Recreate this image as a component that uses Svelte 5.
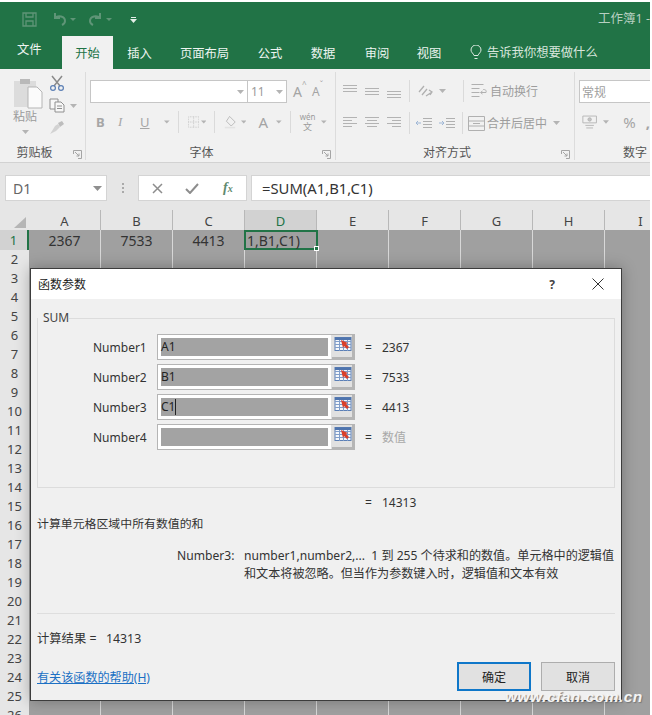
<script>
  const tabs = [
    { t: "文件", w: 62, first: true },
    { t: "开始", w: 51, on: true },
    { t: "插入", w: 53 },
    { t: "页面布局", w: 77 },
    { t: "公式", w: 54 },
    { t: "数据", w: 52 },
    { t: "审阅", w: 56 },
    { t: "视图", w: 48 },
  ];
  const cols = ["A", "B", "C", "D", "E", "F", "G", "H", "I"];
  const rows = Array.from({ length: 26 }, (_, i) => i + 1);
  const args = [
    { name: "Number1", val: "A1", res: "2367" },
    { name: "Number2", val: "B1", res: "7533" },
    { name: "Number3", val: "C1", res: "4413", caret: true },
    { name: "Number4", val: "", res: "数值", hint: true },
  ];
</script>

{#snippet arrow()}
  <svg class="arrow" width="7" height="4" viewBox="0 0 7 4"><path d="M0 0h7L3.500 4z" fill="#b4b4b4" /></svg>
{/snippet}

{#snippet launcher()}
  <svg class="launch" width="9" height="9" viewBox="0 0 9 9" fill="none" stroke="#a5a5a5"><path d="M.5 4V.5H8.500V8.500H5" /><path d="M2 2l4 4M6 3.500V6H3.500" /></svg>
{/snippet}

{#snippet lines(kind)}
  <svg width="16" height="14" viewBox="0 0 16 14" stroke="#b3b3b3" fill="none">
    {#if kind === "top"}
      <path d="M1 1.500h14M1 4.500h14M1 7.500h14" />
    {:else if kind === "mid"}
      <path d="M1 4.500h14M1 7.500h14M1 10.500h14" />
    {:else if kind === "bot"}
      <path d="M1 7.500h14M1 10.500h14M1 13.500h14" />
    {:else if kind === "left"}
      <path d="M1 1.500h14M1 4.500h9M1 7.500h14M1 10.500h9" />
    {:else if kind === "center"}
      <path d="M1 1.500h14M3 4.500h10M1 7.500h14M3 10.500h10" />
    {:else}
      <path d="M1 1.500h14M6 4.500h9M1 7.500h14M6 10.500h9" />
    {/if}
  </svg>
{/snippet}

{#snippet refpick()}
  <svg width="18" height="17" viewBox="0 0 18 17">
    <rect x="1" y="1.500" width="16" height="13" fill="#f4f7fb" stroke="#5b7fb5" />
    <path d="M1 5.500h16M1 8.500h16M1 11.500h16M5.500 2v13M9.500 2v13M13.500 2v13" stroke="#7f9dca" fill="none" />
    <path d="M1 1.500h16v2.500H1z" fill="#4f74ad" />
    <path d="M7 4l7 3-2 1 3 3-2 2-3-3-1 2z" fill="#d9402b" />
  </svg>
{/snippet}

<div class="page">
  <header class="titlebar">
    <svg class="save" width="15" height="15" viewBox="0 0 15 15" fill="none" stroke="#5f9577" stroke-width="1.300">
      <path d="M1 1h13v13H1z" /><path d="M4 1v4h7V1M4 14V9h7v5" />
    </svg>
    <svg class="undo" width="15" height="14" viewBox="0 0 15 14" fill="none" stroke="#5f9577" stroke-width="2">
      <path d="M3 1v5h5" /><path d="M3 6c3-3 10-2 10 3 0 2-1 3-3 4" />
    </svg>
    <svg class="qa-arrow" width="6" height="3" viewBox="0 0 6 3"><path d="M0 0h6L3 3z" fill="#5f9577" /></svg>
    <svg class="redo" width="15" height="14" viewBox="0 0 15 14" fill="none" stroke="#5f9577" stroke-width="2">
      <path d="M12 1v5H7" /><path d="M12 6C9 3 2 4 2 9c0 2 1 3 3 4" />
    </svg>
    <svg class="qa-arrow" width="6" height="3" viewBox="0 0 6 3"><path d="M0 0h6L3 3z" fill="#5f9577" /></svg>
    <svg class="custom" width="7" height="7" viewBox="0 0 7 7"><path d="M1 1h5v1H1zM0 3h7L3.500 7z" fill="#e4efe8" /></svg>
    <span class="doc">工作簿1 -</span>
  </header>

  <nav class="tabs">
    {#each tabs as tab}
      <span class="tab" class:on={tab.on} class:first={tab.first} style="width: {tab.w}px">{tab.t}</span>
    {/each}
    <svg class="bulb" width="12" height="15" viewBox="0 0 12 15" fill="none" stroke="#dfeae3">
      <path d="M4 10.500C3.500 8.500 1 7.500 1 5a5 5 0 0 1 10 0c0 2.500-2.500 3.500-3 5.500zM4.500 13.500h3" />
    </svg>
    <span class="tell">告诉我你想要做什么</span>
  </nav>

  <section class="ribbon">
    <div class="group clip">
      <div class="clip-main">
        <div class="paste">
          <svg width="30" height="34" viewBox="0 0 30 34">
            <path d="M1 6h22v26H1z" fill="#dcdcdc" />
            <path d="M7 4h10v5H7z" fill="#b9b9b9" />
            <path d="M15 12h9l5 5v16H15z" fill="#fbfbfb" stroke="#b5b5b5" />
          </svg>
          <span>粘贴</span>
          {@render arrow()}
        </div>
        <div class="clip-tools">
          <svg width="16" height="16" viewBox="0 0 16 16" fill="none">
            <path d="M3 1l8 10M13 1L5 11" stroke="#8a8a8a" stroke-width="1.500" />
            <circle cx="4" cy="13" r="2.400" stroke="#5b7fb5" stroke-width="1.200" />
            <circle cx="12" cy="13" r="2.400" stroke="#5b7fb5" stroke-width="1.200" />
          </svg>
          <div class="copy">
            <svg width="17" height="15" viewBox="0 0 17 15" fill="#f7f7f7" stroke="#8f8f8f">
              <path d="M1 1h8v10H1z" /><path d="M6 4h6l3 3v7H6z" /><path d="M8 8h5M8 10.500h5" />
            </svg>
            {@render arrow()}
          </div>
          <svg width="16" height="16" viewBox="0 0 16 16">
            <path d="M9 3l4-2 2 3-4 3z" fill="#bdbdbd" />
            <path d="M9 4l2 3-4 4-4 2-2 1 2-3 3-5z" fill="#d2d2d2" />
          </svg>
        </div>
      </div>
      <div class="glabel"><span>剪贴板</span>{@render launcher()}</div>
    </div>

    <div class="group font">
      <div class="grow first-row">
        <div class="combo fontname">{@render arrow()}</div>
        <div class="combo fontsize"><span>11</span>{@render arrow()}</div>
        <span class="grow-a big">A<sup>^</sup></span>
        <span class="grow-a small">A<sup>ˇ</sup></span>
      </div>
      <div class="grow second-row">
        <b class="fmt">B</b>
        <i class="fmt serif">I</i>
        <u class="fmt">U</u>
        {@render arrow()}
        <span class="sep"></span>
        <svg width="14" height="14" viewBox="0 0 14 14" fill="none" stroke="#c0c0c0" stroke-dasharray="1 1">
          <path d="M.5.500h13v13H.500zM7 .500v13M.5 7h13" />
        </svg>
        {@render arrow()}
        <span class="sep"></span>
        <svg width="18" height="16" viewBox="0 0 18 16" fill="none">
          <path d="M7 1l7 7-5 5-6-6z" stroke="#b0b0b0" />
          <path d="M1 14h13v2H1z" fill="#e3e3e3" />
        </svg>
        {@render arrow()}
        <span class="color-a">A</span>
        {@render arrow()}
        <span class="sep"></span>
        <span class="wen"><small>wén</small><span>文</span></span>
        {@render arrow()}
      </div>
      <div class="glabel"><span>字体</span>{@render launcher()}</div>
    </div>

    <div class="group align">
      <div class="align-top">
        <div class="grow wrap-row">
          {@render lines("top")}{@render lines("mid")}{@render lines("bot")}
          <span class="sep"></span>
          <svg width="16" height="14" viewBox="0 0 16 14" fill="none" stroke="#b0b0b0" stroke-width="1.300">
            <path d="M2 8l5-6M5 11l5-6M9 12l6-4M12 6l3 2-2 3" />
          </svg>
          {@render arrow()}
          <span class="sep"></span>
          <svg width="17" height="15" viewBox="0 0 17 15" fill="none" stroke="#b0b0b0">
            <path d="M.5.500h12M.5 4.500h8M.5 8.500h8M.5 12.500h8" /><path d="M10 8.500h5c1-3-2-3-3-3M11.500 7l-2 1.500 2 1.500" />
          </svg>
          <span class="rtext">自动换行</span>
        </div>
        <div class="grow merge-row">
          {@render lines("left")}{@render lines("center")}{@render lines("right")}
          <span class="sep"></span>
          <svg width="17" height="13" viewBox="0 0 17 13" fill="none" stroke="#b0b0b0">
            <path d="M8 1.500h9M8 4.500h9M8 7.500h9M8 10.500h9" /><path d="M6 6H1M3 4L1 6l2 2" stroke="#9fb7d6" />
          </svg>
          <svg width="17" height="13" viewBox="0 0 17 13" fill="none" stroke="#b0b0b0">
            <path d="M8 1.500h9M8 4.500h9M8 7.500h9M8 10.500h9" /><path d="M1 6h5M4 4l2 2-2 2" stroke="#9fb7d6" />
          </svg>
          <span class="sep"></span>
          <svg width="17" height="15" viewBox="0 0 17 15" fill="none" stroke="#b0b0b0">
            <path d="M.5.500h16v14H.500zM.5 5h16M.5 10h16M5 7.500h7" />
          </svg>
          <span class="rtext">合并后居中</span>
          {@render arrow()}
        </div>
      </div>
      <div class="glabel"><span>对齐方式</span>{@render launcher()}</div>
    </div>

    <div class="group number">
      <div class="combo numfmt">常规</div>
      <div class="grow">
        <svg width="18" height="16" viewBox="0 0 18 16" fill="none" stroke="#b0b0b0">
          <path d="M1 1h16v8H1z" /><path d="M4 12h10M5 15h8" /><circle cx="9" cy="5" r="2" fill="#c5c5c5" />
        </svg>
        {@render arrow()}
        <span class="pct">%</span>
        <span class="pct comma">,</span>
      </div>
      <div class="glabel"><span>数字</span></div>
    </div>
  </section>

  <section class="formula">
    <div class="namebox"><span>D1</span><svg width="9" height="5" viewBox="0 0 9 5"><path d="M0 0h9L4.500 5z" fill="#8f8f8f" /></svg></div>
    <span class="dots"></span>
    <div class="fxbtns">
      <svg width="11" height="11" viewBox="0 0 11 11" fill="none" stroke="#8d8d8d" stroke-width="1.500"><path d="M1 1l9 9M10 1l-9 9" /></svg>
      <svg width="14" height="11" viewBox="0 0 14 11" fill="none" stroke="#8d8d8d" stroke-width="2"><path d="M1 6l4 4 8-9" /></svg>
      <span class="fx">f<small>x</small></span>
    </div>
    <div class="fxinput">=SUM(A1,B1,C1)</div>
  </section>

  <section class="sheet">
    <div class="sheetrow head">
      <div class="corner"><svg width="12" height="11" viewBox="0 0 12 11"><path d="M12 0v11H0z" fill="#b5b5b5" /></svg></div>
      {#each cols as c}
        <div class="colhead" class:sel={c === "D"}>{c}</div>
      {/each}
    </div>
    {#each rows as r}
      <div class="sheetrow" class:tall={r === 1}>
        <div class="rowhead" class:sel={r === 1}>{r}</div>
        {#each cols as c, i}
          <div class="cell" class:active={r === 1 && c === "D"}>
            {#if r === 1 && i < 3}{["2367", "7533", "4413"][i]}{/if}
            {#if r === 1 && c === "D"}<span class="celltext">1,B1,C1)</span><em class="handle"></em>{/if}
          </div>
        {/each}
      </div>
    {/each}

    <div class="dialog">
      <div class="dtitle">
        <span>函数参数</span>
        <span class="help">?</span>
        <svg width="12" height="12" viewBox="0 0 12 12" fill="none" stroke="#333"><path d="M.5.500l11 11M11.500.500l-11 11" /></svg>
      </div>
      <div class="dbody">
        <fieldset>
          <legend>SUM</legend>
          {#each args as a}
            <div class="arg">
              <label for={a.name}>{a.name}</label>
              <div class="argbox">
                <div class="argval" id={a.name}>{a.val}{#if a.caret}<span class="caret"></span>{/if}</div>
                <div class="refbtn">{@render refpick()}</div>
              </div>
              <span class="eq">=</span>
              <span class="res" class:hint={a.hint}>{a.res}</span>
            </div>
          {/each}
        </fieldset>
        <div class="total"><span class="eq">=</span><span class="res">14313</span></div>
        <p class="desc">计算单元格区域中所有数值的和</p>
        <div class="detail">
          <span class="dname">Number3:</span>
          <p>number1,number2,...&nbsp; 1 到 255 个待求和的数值。单元格中的逻辑值和文本将被忽略。但当作为参数键入时，逻辑值和文本有效</p>
        </div>
        <hr />
        <p class="result">计算结果 =&nbsp;&nbsp; 14313</p>
        <div class="foot">
          <a href="#help">有关该函数的帮助(H)</a>
          <button class="ok">确定</button>
          <button>取消</button>
        </div>
      </div>
    </div>
    <span class="mark">www.cfan.com.cn</span>
  </section>
</div>

<style>
  :global(body) {
    margin: 0;
    background: #fff;
  }

  .page {
    width: 650px;
    height: 713px;
    padding-top: 2px;
    overflow: hidden;
    font-family: "Noto Sans", "Noto Sans CJK SC", sans-serif;
    font-size: 12px;
    color: #333;
  }

  .titlebar {
    height: 34px;
    background: #217346;
    display: flex;
    align-items: center;
    padding-left: 22px;
  }
  .undo { margin-left: 15px; }
  .redo { margin-left: 12px; }
  .qa-arrow { margin-left: 3px; }
  .custom { margin-left: 18px; }
  .doc {
    margin: 0 0 3px auto;
    color: #b7d0c1;
    font-size: 12.500px;
    white-space: nowrap;
  }

  .tabs {
    height: 33px;
    background: #217346;
    display: flex;
    color: #eef5f1;
    font-size: 12.300px;
  }
  .tab {
    display: flex;
    align-items: center;
    justify-content: center;
    box-sizing: border-box;
    white-space: nowrap;
  }
  .tab.first {
    justify-content: flex-start;
    padding: 0 0 7px 17px;
  }
  .tab.on {
    background: #f1f1f1;
    color: #217346;
  }
  .bulb {
    margin: 9px 0 0 17px;
  }
  .tell {
    margin-left: 5px;
    line-height: 33px;
    color: #d8e6dd;
    white-space: nowrap;
  }

  .ribbon {
    height: 94px;
    background: #f1f1f1;
    border-bottom: 1px solid #d2d2d2;
    box-sizing: border-box;
    display: flex;
    color: #9b9b9b;
  }
  .group {
    position: relative;
    flex: none;
    padding-top: 8px;
    box-sizing: border-box;
    border-right: 1px solid #dcdcdc;
    height: 88px;
    margin-top: 3px;
  }
  .glabel {
    position: absolute;
    left: 0;
    right: 0;
    top: 73px;
    text-align: center;
    color: #555;
    font-size: 12px;
    line-height: 16px;
  }
  .launch {
    position: absolute;
    right: 4px;
    top: 5px;
  }
  .grow {
    display: flex;
    align-items: center;
    height: 24px;
  }
  .sep {
    width: 1px;
    height: 22px;
    background: #dadada;
    flex: none;
  }

  .clip { width: 86px; }
  .clip-main {
    display: flex;
    padding-left: 13px;
  }
  .paste {
    width: 36px;
    display: flex;
    flex-direction: column;
    align-items: flex-start;
    margin-top: -5px;
    font-size: 12px;
    line-height: 15px;
  }
  .paste .arrow { margin: 6px 0 0 9px; }
  .clip-tools {
    display: flex;
    flex-direction: column;
    gap: 7px;
    margin-top: -5px;
  }
  .copy {
    display: flex;
    align-items: center;
    gap: 4px;
  }
  .clip .glabel { padding-right: 16px; }
  .clip .launch { right: 3px; }

  .font {
    width: 250px;
    padding-left: 4px;
  }
  .font .glabel { padding-right: 18px; }
  .combo {
    background: #fff;
    border: 1px solid #c6c6c6;
    box-sizing: border-box;
    height: 23px;
    display: flex;
    align-items: center;
  }
  .fontname {
    width: 158px;
    justify-content: flex-end;
    padding-right: 3px;
  }
  .fontsize {
    width: 40px;
    margin-left: -1px;
    padding-left: 3px;
    justify-content: space-between;
    padding-right: 3px;
  }
  .grow-a {
    font-size: 14px;
    color: #a4a4a4;
    position: relative;
  }
  .grow-a sup { font-size: 8px; position: absolute; top: -4px; }
  .grow-a.big { margin-left: 6px; }
  .grow-a.small { margin-left: 10px; font-size: 12px; }
  .first-row { height: 23px; }
  .second-row {
    margin-top: 7px;
    padding-left: 6px;
  }
  .fmt {
    width: 22px;
    font-size: 13px;
    flex: none;
    color: #a6a6a6;
    text-align: left;
  }
  .serif { font-family: "Liberation Serif", serif; }
  .second-row .arrow { margin: 0 8px 0 2px; }
  .second-row .sep { margin: 0 9px 0 0; }
  .color-a {
    font-size: 15px;
    color: #a4a4a4;
    margin: 0 6px 0 4px;
  }
  .wen {
    display: flex;
    flex-direction: column;
    align-items: center;
    font-size: 9px;
    line-height: 10px;
    margin-right: 4px;
  }
  .wen small { font-size: 8px; line-height: 10px; }

  .align {
    width: 239px;
    padding-left: 6px;
  }
  .align .glabel { padding-right: 16px; }
  .align-top {
    display: flex;
    flex-direction: column;
    gap: 8px;
    margin-top: -1px;
  }
  .align .grow { gap: 6px; }
  .align .sep { margin: 0 1px; }
  .wrap-row .arrow { margin-right: 10px; }
  .merge-row .sep + svg { margin-left: -2px; }
  .rtext {
    color: #9d9d9d;
    font-size: 12px;
    margin-left: -4px;
    white-space: nowrap;
  }

  .number {
    flex: 1;
    min-width: 0;
    border-right: 0;
    padding-left: 4px;
    overflow: hidden;
  }
  .numfmt {
    padding-left: 2px;
    border-right: 0;
    width: 72px;
    color: #a0a0a0;
  }
  .number .grow {
    margin-top: 7px;
    gap: 6px;
    padding-left: 3px;
  }
  .pct {
    font-size: 15px;
    color: #a4a4a4;
    margin-left: 8px;
  }
  .comma { margin-left: 4px; font-weight: 700; }
  .number .glabel {
    text-align: left;
    left: 48px;
    white-space: nowrap;
  }

  .formula {
    height: 47px;
    background: #e6e6e6;
    display: flex;
    align-items: flex-start;
    padding: 12px 0 0 5px;
    box-sizing: border-box;
  }
  .namebox, .fxbtns, .fxinput {
    height: 26px;
    background: #fff;
    border: 1px solid #d4d4d4;
    box-sizing: border-box;
    display: flex;
    align-items: center;
  }
  .namebox {
    width: 102px;
    padding: 0 4px 0 7px;
    justify-content: space-between;
    font-size: 14px;
    color: #666;
  }
  .dots {
    width: 2px;
    height: 10px;
    margin: 8px 14px 0 15px;
    background: repeating-linear-gradient(#aaa 0 2px, transparent 2px 4px);
  }
  .fxbtns {
    width: 109px;
    padding-left: 13px;
    gap: 22px;
  }
  .fx {
    font-family: "Liberation Serif", serif;
    font-style: italic;
    font-weight: 700;
    font-size: 14px;
    color: #5f8a6f;
    margin-left: 2px;
  }
  .fx small { font-size: 10px; }
  .fxinput {
    flex: 1;
    margin-left: 4px;
    padding-left: 10px;
    border-right: 0;
    font-size: 14.800px;
    color: #333;
  }

  .sheet {
    position: relative;
    background: #a0a0a0;
  }
  .sheetrow {
    display: grid;
    grid-template-columns: 29px repeat(9, 72px);
    height: 19px;
  }
  .sheetrow.tall { height: 20px; }
  .head {
    height: 20px;
    background: #e6e6e6;
  }
  .corner {
    display: flex;
    justify-content: flex-end;
    padding: 7px 3px 0 0;
  }
  .colhead {
    text-align: center;
    font-size: 13px;
    line-height: 22px;
    color: #444;
    border-right: 1px solid #b8b8b8;
    box-sizing: border-box;
  }
  .colhead.sel {
    background: #d2d2d2;
    color: #217346;
    border-bottom: 1px solid #217346;
  }
  .rowhead {
    background: #e6e6e6;
    border-bottom: 1px solid #c4c4c4;
    box-sizing: border-box;
    text-align: center;
    font-size: 13px;
    line-height: 19px;
    color: #444;
  }
  .rowhead.sel {
    background: #d2d2d2;
    color: #217346;
    border-right: 2px solid #217346;
    line-height: 21px;
  }
  .cell {
    background: #a0a0a0;
    border-right: 1px solid #d8d8d8;
    border-bottom: 1px solid #d8d8d8;
    box-sizing: border-box;
    text-align: center;
    font-size: 14px;
    line-height: 21px;
    color: #333;
    white-space: nowrap;
  }
  .cell.active {
    position: relative;
    border: 2px solid #217346;
    margin-left: -1px;
    width: 74px;
    height: 20px;
    text-align: left;
    line-height: 18px;
    z-index: 1;
    overflow: visible;
  }
  .celltext {
    margin-left: 1px;
  }
  .handle {
    position: absolute;
    right: -3px;
    bottom: -3px;
    width: 5px;
    height: 5px;
    background: #217346;
    border: 1px solid #fff;
    box-sizing: border-box;
  }

  .dialog {
    position: absolute;
    left: 30px;
    top: 58px;
    width: 592px;
    height: 433px;
    box-sizing: border-box;
    border: 1px solid #3c3c3c;
    background: #f0f0f0;
    box-shadow: 0 0 14px rgba(0, 0, 0, 0.28);
    z-index: 2;
  }
  .dtitle {
    height: 30px;
    background: #fff;
    display: flex;
    align-items: center;
    padding: 0 17px 0 7px;
    font-size: 12px;
    color: #222;
  }
  .help {
    margin-left: auto;
    margin-right: 37px;
    font-weight: 700;
    color: #444;
  }
  .dbody {
    padding: 0 6px;
    position: relative;
    color: #333;
  }
  fieldset {
    margin: 13px 0 0;
    padding: 0 0 36px 0;
    height: 176px;
    box-sizing: border-box;
    border: 1px solid #dcdcdc;
    display: flex;
    flex-direction: column;
    gap: 4px;
  }
  legend {
    padding: 0 0 0 5px;
    margin-left: 0;
    font-size: 12px;
    line-height: 12px;
    color: #444;
  }
  .arg {
    display: flex;
    align-items: center;
    height: 26px;
    font-size: 12px;
  }
  .arg:first-of-type { margin-top: 10px; }
  .arg label {
    width: 119px;
    padding-left: 55px;
    box-sizing: border-box;
  }
  .argbox {
    width: 198px;
    height: 26px;
    box-sizing: border-box;
    display: flex;
    background: #fff;
    border: 1px solid #b5b5b5;
    padding: 3px 0 3px 3px;
  }
  .argval {
    width: 168px;
    background: #a3a3a3;
    line-height: 20px;
    color: #222;
    display: flex;
    align-items: center;
  }
  .caret {
    width: 1px;
    height: 16px;
    background: #222;
  }
  .refbtn {
    width: 22px;
    margin: -3px 0 -3px 3px;
    background: #e1e1e1;
    border-left: 1px solid #e1e1e1;
    display: flex;
    align-items: flex-start;
    justify-content: center;
    padding-top: 1px;
    box-shadow: inset -2px -2px 0 #b5b5b5;
  }
  .eq { margin-left: 10px; width: 17px; flex: none; }
  .res { font-size: 12px; }
  .hint { color: #a8a8a8; }
  .total {
    display: flex;
    margin: 7px 0 0 322px;
    font-size: 12px;
    line-height: 16px;
  }
  .total .eq { margin-left: 6px; width: 17px; }
  .desc {
    margin: 4px 0 0;
    line-height: 16px;
    font-size: 11.900px;
  }
  .detail {
    display: flex;
    margin-top: 16px;
    padding-left: 140px;
    line-height: 18px;
    font-size: 12.100px;
  }
  .dname {
    width: 67px;
    flex: none;
    white-space: nowrap;
  }
  .detail p {
    margin: 0;
    width: 376px;
  }
  hr {
    border: 0;
    border-top: 1px solid #dedede;
    margin: 30px 0 0;
  }
  .result {
    margin: 17px 0 0;
    line-height: 16px;
    font-size: 12.300px;
  }
  .foot {
    display: flex;
    align-items: center;
    gap: 10px;
    margin-top: 15px;
  }
  .foot a {
    margin-right: auto;
    color: #1c70c4;
    font-size: 12.100px;
  }
  button {
    width: 74px;
    height: 29px;
    box-sizing: border-box;
    background: #e1e1e1;
    border: 1px solid #adadad;
    font: inherit;
    font-size: 12px;
    color: #222;
    padding: 0;
  }
  button.ok {
    border: 2px solid #0f77c9;
  }
  .mark {
    position: absolute;
    left: 505px;
    top: 478px;
    z-index: 3;
    font-family: "Liberation Sans", sans-serif;
    font-weight: 700;
    font-style: italic;
    font-size: 15.500px;
    color: #f4f4f4;
    text-shadow: 1px 1px 1px #777;
    letter-spacing: 0.500px;
    white-space: nowrap;
  }
</style>
